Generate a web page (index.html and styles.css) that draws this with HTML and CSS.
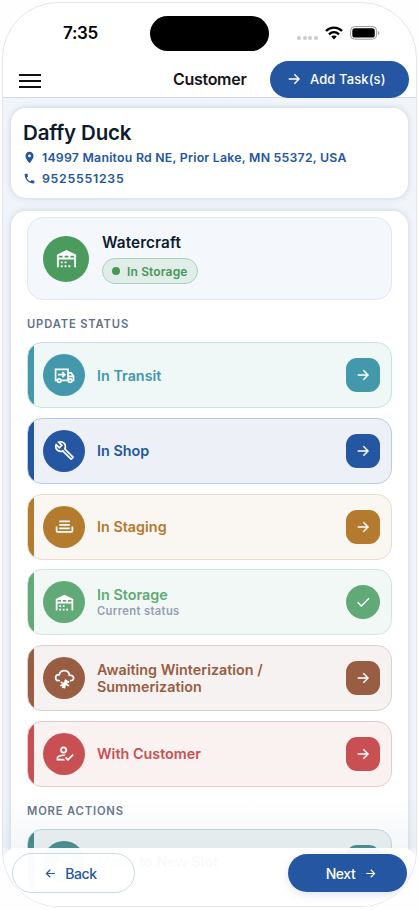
FILE: index.html
```html
<!DOCTYPE html>
<html lang="en">
<head>
<meta charset="utf-8">
<title>Customer</title>
<link rel="stylesheet" href="styles.css">
</head>
<body>
<svg class="defs" width="0" height="0" aria-hidden="true">
  <symbol id="arrow" viewBox="0 0 24 24"><path d="M4 12h15M12.5 5l7 7-7 7" fill="none" stroke="currentColor" stroke-width="2.2"/></symbol>
  <symbol id="back" viewBox="0 0 24 24"><path d="M20 12H5M11.500 5l-7 7 7 7" fill="none" stroke="currentColor" stroke-width="2.2"/></symbol>
  <symbol id="check" viewBox="0 0 24 24"><path d="M4 12.500l5.500 5.500L21 6.500" fill="none" stroke="currentColor" stroke-width="2"/></symbol>
  <symbol id="warehouse" viewBox="0 0 24 24"><path fill="currentColor" d="M6 19H8V21H6V19M12 3L2 8V21H4V13H20V21H22V8L12 3M8 11H4V9H8V11M14 11H10V9H14V11M20 11H16V9H20V11M6 15H8V17H6V15M10 15H12V17H10V15M10 19H12V21H10V19M14 19H16V21H14V19Z"/></symbol>
  <symbol id="truck" viewBox="0 0 24 24"><g fill="none" stroke="currentColor" stroke-width="1.900"><path d="M3.500 17.500H1.800V5H16V17.500H8.500M16 9h3.500l2.800 3.500v5h-1.500M16 13h6"/><circle cx="6" cy="17.800" r="2"/><circle cx="18.500" cy="17.800" r="2"/><path d="M4.500 11H12M9.500 8l3 3-3 3"/></g></symbol>
  <symbol id="wrench" viewBox="0 0 24 24"><path fill="currentColor" d="M22.610 19L13.530 9.910C14.460 7.570 14 4.810 12.090 2.910C9.790.610 6.210.4 3.660 2.260L7.500 6.110L6.080 7.520L2.250 3.690C.39 6.230.6 9.820 2.900 12.110C4.760 13.970 7.470 14.460 9.790 13.590L18.900 22.700C19.290 23.090 19.920 23.090 20.310 22.700L22.610 20.400C23 20 23 19.390 22.610 19M19.610 20.590L10.150 11.130C9.540 11.580 8.860 11.850 8.150 11.950C6.790 12.150 5.360 11.740 4.320 10.700C3.370 9.760 2.930 8.500 3 7.260L6.090 10.350L10.330 6.110L7.240 3C8.480 2.950 9.730 3.390 10.680 4.330C11.760 5.410 12.170 6.900 11.920 8.290C11.800 9 11.500 9.660 11.040 10.250L20.500 19.700Z"/></symbol>
  <symbol id="tray" viewBox="0 0 24 24"><path fill="currentColor" d="M18 5H6V7H18V5M6 9H18V11H6V9M2 12H4V17H20V12H22V17A2 2 0 0 1 20 19H4A2 2 0 0 1 2 17V12M18 13H6V15H18V13Z"/></symbol>
  <symbol id="cloud" viewBox="0 0 24 24"><path fill="none" stroke="currentColor" stroke-width="2" stroke-linecap="round" d="M6 14.500C.500 14.500 .500 7.500 6 7.500 7.500 1 17 1.500 17.500 8c6.500 0 6 6.500 1.500 6.500M13 14l-1 8.500M8.500 16.500l8 3.500M16.500 16l-8.500 4M10 22l4.500-7.500"/></symbol>
  <symbol id="person" viewBox="0 0 24 24"><path fill="currentColor" d="M21.100 12.500L22.500 13.910L15.970 20.500L12.500 17L13.900 15.590L15.970 17.670L21.100 12.500M11 4A4 4 0 0 1 15 8A4 4 0 0 1 11 12A4 4 0 0 1 7 8A4 4 0 0 1 11 4M11 6A2 2 0 0 0 9 8A2 2 0 0 0 11 10A2 2 0 0 0 13 8A2 2 0 0 0 11 6M11 13C11.680 13 12.500 13.090 13.410 13.260L11.740 14.930L11 14.900C8.030 14.900 4.900 16.360 4.900 17V18.100H11.100L13 20H3V17C3 14.340 8.330 13 11 13Z"/></symbol>
  <symbol id="move" viewBox="0 0 24 24"><path fill="none" stroke="currentColor" stroke-width="3" d="M6 7h14M16 3l4 4-4 4M18 17H4M8 13l-4 4 4 4"/></symbol>
</svg>
<div class="phone">
  <div class="status">
    <span class="time">7:35</span>
    <span class="island"></span>
    <span class="signals">
      <span class="dots"><i></i><i></i><i></i><i></i></span>
      <svg class="wifi" viewBox="0 0 18 14"><g fill="none" stroke="#000" stroke-width="2.300"><path d="M1 5c4.500-4.500 11.500-4.500 16 0M4 8.300c3-2.800 7-2.800 10 0"/></g><path d="M6.200 10.500c1.700-1.400 3.900-1.400 5.600 0L9 13.500z"/></svg>
      <svg class="battery" viewBox="0 0 30 14"><rect x=".6" y=".6" width="26" height="12.600" rx="4" fill="none" stroke="#999" stroke-width="1"/><rect x="2.300" y="2.300" width="22.500" height="9.200" rx="2.600"/><path d="M28 5v4c1.800-.6 1.800-3.400 0-4z" fill="#999"/></svg>
    </span>
  </div>
  <header class="bar">
    <span class="menu"><i></i><i></i><i></i></span>
    <h1>Customer</h1>
    <button class="add"><svg><use href="#arrow"/></svg><span>Add Task(s)</span></button>
  </header>
  <main>
    <section class="card customer">
      <h2>Daffy Duck</h2>
      <p><svg viewBox="0 0 24 24"><path fill="currentColor" fill-rule="evenodd" d="M12 1.500c-4.300 0-7.500 3.300-7.500 7.500C4.500 14.500 12 22.500 12 22.500S19.500 14.500 19.500 9c0-4.200-3.200-7.500-7.500-7.500zm0 4.800a2.700 2.700 0 1 1 0 5.400 2.700 2.700 0 0 1 0-5.400z"/></svg><span class="address">14997 Manitou Rd NE, Prior Lake, MN 55372, USA</span></p>
      <p><svg viewBox="0 0 24 24"><path fill="currentColor" d="M6.600 10.800c1.400 2.800 3.800 5.100 6.600 6.600l2.200-2.200c.3-.3.700-.4 1-.2 1.100.4 2.300.6 3.600.6.600 0 1 .4 1 1V20c0 .6-.4 1-1 1C10.600 21 3 13.400 3 4c0-.6.400-1 1-1h3.500c.6 0 1 .4 1 1 0 1.300.2 2.500.6 3.600.1.300 0 .7-.2 1z"/></svg><span class="phone-number">9525551235</span></p>
    </section>
    <section class="card detail">
      <div class="craft">
        <span class="disc"><svg><use href="#warehouse"/></svg></span>
        <div><h3>Watercraft</h3><span class="pill"><i></i>In Storage</span></div>
      </div>
      <h4>UPDATE STATUS</h4>
      <div class="list">
        <div class="row transit"><span class="disc"><svg><use href="#truck"/></svg></span><b>In Transit</b><span class="go"><svg><use href="#arrow"/></svg></span></div>
        <div class="row shop"><span class="disc"><svg><use href="#wrench"/></svg></span><b>In Shop</b><span class="go"><svg><use href="#arrow"/></svg></span></div>
        <div class="row staging"><span class="disc"><svg><use href="#tray"/></svg></span><b>In Staging</b><span class="go"><svg><use href="#arrow"/></svg></span></div>
        <div class="row storage"><span class="disc"><svg><use href="#warehouse"/></svg></span><b>In Storage<small>Current status</small></b><span class="go round"><svg><use href="#check"/></svg></span></div>
        <div class="row winter"><span class="disc"><svg><use href="#cloud"/></svg></span><b>Awaiting Winterization /<br>Summerization</b><span class="go"><svg><use href="#arrow"/></svg></span></div>
        <div class="row with"><span class="disc"><svg><use href="#person"/></svg></span><b>With Customer</b><span class="go"><svg><use href="#arrow"/></svg></span></div>
      </div>
      <h4 class="more">MORE ACTIONS</h4>
      <div class="row move"><span class="disc"><svg><use href="#move"/></svg></span><b>Move to New Slot</b><span class="go"><svg><use href="#arrow"/></svg></span></div>
    </section>
  </main>
  <div class="fade"></div>
  <footer>
    <button class="prev"><svg><use href="#back"/></svg><span>Back</span></button>
    <button class="next"><span>Next</span><svg><use href="#arrow"/></svg></button>
  </footer>
</div>
</body>
</html>
```
FILE: styles.css
```css
* { box-sizing: border-box; }
body { margin: 0; padding: 2px; height: 910px; overflow: hidden; background: #fefefe; font-family: Inter, "Liberation Sans", sans-serif; color: #0e1b2c; }
h1, h2, h3, h4, p { margin: 0; }
svg { display: block; flex: none; }
.defs { position: absolute; }
button { border: 0; font: inherit; display: flex; align-items: center; }
.phone { position: relative; width: 415px; height: 905px; border: 1px solid #e3e5e9; border-radius: 56px; overflow: hidden; background: #fff; display: flex; flex-direction: column; }
.status { height: 58px; flex: none; display: flex; align-items: center; padding: 2px 36px 0 60px; }
.time { width: 87px; font-size: 17px; font-weight: 600; letter-spacing: -.3px; color: #000; }
.island { width: 119px; height: 35px; border-radius: 18px; background: #000; }
.signals { margin-left: auto; display: flex; align-items: center; gap: 7px; }
.dots { display: flex; gap: 1.700px; padding-top: 9px; }
.dots i { width: 4px; height: 4px; border-radius: 50%; background: #ccc; }
.wifi { width: 18px; height: 14px; }
.battery { width: 30px; height: 14px; }
.bar { position: relative; z-index: 1; height: 37px; flex: none; display: flex; align-items: center; padding: 0 7px 0 16px; border-bottom: 1px solid #d4d8de; }
.menu { width: 154px; display: flex; flex-direction: column; gap: 4px; padding-top: 4px; }
.menu i { width: 22px; height: 2px; background: #111; }
.bar h1 { width: 97px; flex: none; font-size: 16px; font-weight: 600; letter-spacing: -.3px; line-height: 20px; color: #161618; margin: -1px 0 0 0; }
.add { flex: none; width: 139px; height: 37px; border-radius: 19px; background: #2456a2; color: #fff; padding: 0 0 0 16px; gap: 8px; margin-left: auto; font-size: 13px; font-weight: 500; letter-spacing: .1px; white-space: nowrap; }
.add svg { width: 16px; height: 16px; }
main { flex: 1; min-height: 0; padding: 10px 8px 0; background: #f1f5fa; display: flex; flex-direction: column; gap: 13px; }
.card { background: #fff; border-radius: 15px; box-shadow: 0 0 6px rgba(70, 95, 130, .24); flex: none; }
.customer { height: 90px; padding: 12px 12px 0; }
.customer h2 { font-size: 20.5px; line-height: 26px; font-weight: 600; letter-spacing: -.15px; }
.customer p { display: flex; align-items: center; gap: 6px; height: 21px; padding-top: 2px; color: #2456a2; font-size: 12.3px; font-weight: 600; letter-spacing: .24px; white-space: nowrap; }
.phone-number { letter-spacing: .75px; }
.customer p svg { width: 13px; height: 13px; }
.detail { height: 720px; padding: 6px 16px 0; }
.craft { height: 83px; border: 1px solid #e1e7ef; border-radius: 16px; background: #f4f7fc; display: flex; align-items: center; gap: 13px; padding-left: 15px; }
.disc { flex: none; border-radius: 50%; display: flex; align-items: center; justify-content: center; color: #fff; }
.craft .disc { width: 46px; height: 46px; background: #4a9b5d; }
.disc svg { width: 21px; height: 21px; }
.craft .disc svg { width: 23px; height: 23px; }
.craft h3 { font-size: 15.3px; line-height: 20px; font-weight: 600; letter-spacing: .1px; margin-bottom: 5px; }
.pill { display: flex; align-items: center; width: 96px; height: 26px; border: 1px solid #a9d4b7; border-radius: 13px; background: #e0ede9; color: #459858; padding-left: 9px; gap: 7px; font-size: 12px; font-weight: 600; letter-spacing: .15px; white-space: nowrap; }
.pill i { width: 8px; height: 8px; border-radius: 50%; background: #459858; }
h4 { font-size: 11.2px; line-height: 14px; font-weight: 600; letter-spacing: .85px; color: #647087; margin: 17px 0 11px; }
.list { display: flex; flex-direction: column; gap: 9.8px; }
.row { --tone: #4498ac; height: 66px; border: 1px solid var(--edge); border-radius: 15px; background: linear-gradient(90deg, var(--tone) 7px, var(--bg) 7px); background-origin: border-box; display: flex; align-items: center; padding: 0 11px 0 15px; color: var(--tone); }
.row .disc { width: 42px; height: 42px; margin-right: 12px; background: var(--tone); }
.row b { flex: 1; font-size: 14.3px; line-height: 17px; font-weight: 600; letter-spacing: .03px; }
.row small { display: block; font-size: 11.2px; line-height: 15px; font-weight: 600; letter-spacing: .36px; color: #959eaf; padding-top: 1px; }
.go { width: 34px; height: 34px; border-radius: 11px; background: var(--tone); color: #fff; display: flex; align-items: center; justify-content: center; }
.go.round { border-radius: 50%; }
.go svg { width: 16px; height: 16px; }
.transit { --bg: #eff7f7; --edge: #c5e3e1; }
.shop { --tone: #2456a2; --bg: #edf1f7; --edge: #b7cbe4; }
.staging { --tone: #b47a2e; --bg: #faf6f1; --edge: #eaddca; }
.storage { --tone: #61aa77; --bg: #f2f8f5; --edge: #cfe7da; }
.winter { --tone: #985d42; --bg: #f6f2f2; --edge: #dfcfca; }
.with { --tone: #c95052; --bg: #faf1f1; --edge: #e9caca; }
.move { --tone: #287878; --bg: #e9f0f1; --edge: #bad2d2; }
.move b { color: #667; letter-spacing: .05px; }
h4.more { margin: 17px 0 11px; }
.fade { position: absolute; left: 0; right: 0; bottom: 58px; height: 50px; background: linear-gradient(rgba(205, 215, 220, 0), rgba(205, 215, 220, .22)); }
footer { position: absolute; left: 0; right: 0; bottom: 0; height: 58px; border-radius: 13px 13px 0 0; background: rgba(255, 255, 255, .965); display: flex; justify-content: space-between; align-items: flex-start; padding: 5px 9px 0 9px; }
footer button { border-radius: 20px; justify-content: center; font-size: 14px; font-weight: 500; }
footer svg { width: 13px; height: 13px; }
.prev { width: 123px; height: 40px; border: 1px solid #c8dbe3; background: rgba(255, 255, 255, .5); color: #2456a2; gap: 8px; padding: 0 6px 0 0; }
.prev span { letter-spacing: -.4px; }
.next { width: 119px; height: 38px; margin-top: 1px; background: #2456a2; color: #fff; gap: 9px; padding: 0 0 0 8px; letter-spacing: -.4px; box-shadow: 0 3px 9px rgba(36, 86, 162, .14); }
```
